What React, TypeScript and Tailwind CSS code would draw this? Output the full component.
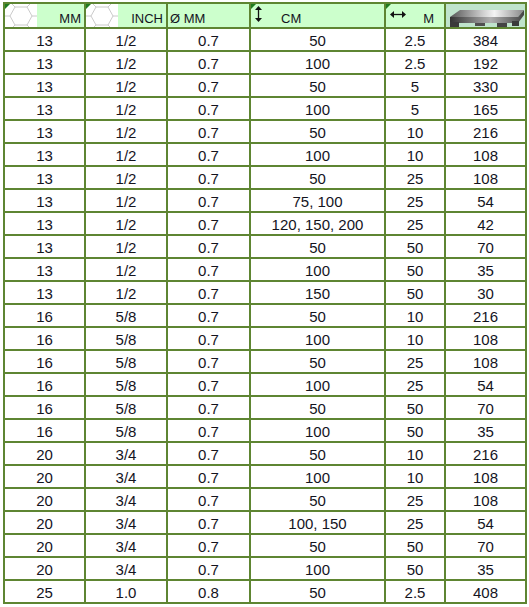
import React from 'react'

const rows: string[][] = [
  ['13', '1/2', '0.7', '50', '2.5', '384'],
  ['13', '1/2', '0.7', '100', '2.5', '192'],
  ['13', '1/2', '0.7', '50', '5', '330'],
  ['13', '1/2', '0.7', '100', '5', '165'],
  ['13', '1/2', '0.7', '50', '10', '216'],
  ['13', '1/2', '0.7', '100', '10', '108'],
  ['13', '1/2', '0.7', '50', '25', '108'],
  ['13', '1/2', '0.7', '75, 100', '25', '54'],
  ['13', '1/2', '0.7', '120, 150, 200', '25', '42'],
  ['13', '1/2', '0.7', '50', '50', '70'],
  ['13', '1/2', '0.7', '100', '50', '35'],
  ['13', '1/2', '0.7', '150', '50', '30'],
  ['16', '5/8', '0.7', '50', '10', '216'],
  ['16', '5/8', '0.7', '100', '10', '108'],
  ['16', '5/8', '0.7', '50', '25', '108'],
  ['16', '5/8', '0.7', '100', '25', '54'],
  ['16', '5/8', '0.7', '50', '50', '70'],
  ['16', '5/8', '0.7', '100', '50', '35'],
  ['20', '3/4', '0.7', '50', '10', '216'],
  ['20', '3/4', '0.7', '100', '10', '108'],
  ['20', '3/4', '0.7', '50', '25', '108'],
  ['20', '3/4', '0.7', '100, 150', '25', '54'],
  ['20', '3/4', '0.7', '50', '50', '70'],
  ['20', '3/4', '0.7', '100', '50', '35'],
  ['25', '1.0', '0.8', '50', '2.5', '408'],
]

function Marker() {
  return (
    <svg className="absolute left-0 top-0" width="5" height="5" viewBox="0 0 5 5">
      <polygon points="0,0 5,0 0,5" fill="#1f7a1f" />
    </svg>
  )
}

function Hex() {
  return (
    <svg className="absolute left-0 top-0 bg-white" width="32" height="23" viewBox="0 0 32 23">
      <g stroke="#c4c4c4" strokeWidth="0.9" fill="none">
        <polygon points="10,3 22,3 27,12 22,21 10,21 5,12" />
        <line x1="10" y1="3" x2="7" y2="0" />
        <line x1="22" y1="3" x2="25" y2="0" />
        <line x1="5" y1="12" x2="0" y2="12" />
        <line x1="27" y1="12" x2="32" y2="12" />
        <line x1="10" y1="21" x2="8" y2="23" />
        <line x1="22" y1="21" x2="24" y2="23" />
      </g>
    </svg>
  )
}

function Pallet() {
  return (
    <svg width="79" height="23" viewBox="0 0 79 23">
      <defs>
        <linearGradient id="top" x1="0" x2="1" y1="0" y2="0">
          <stop offset="0" stopColor="#555" />
          <stop offset="0.45" stopColor="#d0d0d0" />
          <stop offset="0.6" stopColor="#f4f4f4" />
          <stop offset="1" stopColor="#888" />
        </linearGradient>
        <linearGradient id="front" x1="0" x2="1" y1="0" y2="0">
          <stop offset="0" stopColor="#333" />
          <stop offset="0.55" stopColor="#b0b0b0" />
          <stop offset="1" stopColor="#444" />
        </linearGradient>
      </defs>
      <polygon points="14,6 78,6 72,13 4,13" fill="url(#top)" />
      <polygon points="4,13 72,13 78,6 78,11 72,19 4,19" fill="url(#front)" />
      <rect x="4" y="18" width="9" height="7" fill="#3a3a3a" />
      <rect x="29" y="19" width="10" height="3" fill="#505050" />
      <rect x="51" y="19" width="10" height="4" fill="#444" />
      <rect x="66" y="17" width="7" height="5" fill="#3a3a3a" />
    </svg>
  )
}

const cell = 'border-r-2 border-b-2 border-[#5e8532]'

export default function App() {
  return (
    <div className="min-h-screen bg-white pt-[2px] pl-[3px]" style={{ fontFamily: '"Liberation Sans", Arial, sans-serif' }}>
      <div className="grid w-[524px] grid-cols-[81px_82px_83px_135px_60px_81px] border-l-2 border-t-2 border-[#5e8532] text-[#14141e]">
        <div className={`${cell} relative flex h-[25px] items-end justify-end bg-[#ccffcc] pr-[3px] text-[13px] leading-[17px]`}>
          <Hex />
          <Marker />
          MM
        </div>
        <div className={`${cell} relative flex h-[25px] items-end justify-end bg-[#ccffcc] pr-[3px] text-[13px] leading-[17px]`}>
          <Hex />
          <Marker />
          INCH
        </div>
        <div className={`${cell} flex h-[25px] items-end bg-[#ccffcc] pl-[2px] text-[13px] leading-[17px]`}>Ø MM</div>
        <div className={`${cell} relative flex h-[25px] items-end bg-[#ccffcc] pl-[30px] text-[13px] leading-[17px]`}>
          <Marker />
          <svg className="absolute left-[4px] top-[2px]" width="7" height="16" viewBox="0 0 7 16">
            <line x1="3.5" y1="3" x2="3.5" y2="13" stroke="#111" strokeWidth="1.3" />
            <polygon points="3.5,0 7,4 0,4" fill="#111" />
            <polygon points="3.5,16 7,12 0,12" fill="#111" />
          </svg>
          CM
        </div>
        <div className={`${cell} relative flex h-[25px] items-end justify-end bg-[#ccffcc] pr-[10px] text-[13px] leading-[17px]`}>
          <Marker />
          <svg className="absolute left-[4px] top-[7px]" width="16" height="7" viewBox="0 0 16 7">
            <line x1="3" y1="3.5" x2="13" y2="3.5" stroke="#111" strokeWidth="1.3" />
            <polygon points="0,3.5 4,0 4,7" fill="#111" />
            <polygon points="16,3.5 12,0 12,7" fill="#111" />
          </svg>
          M
        </div>
        <div className={`${cell} h-[25px] bg-[#bfe4cc]`}>
          <Pallet />
        </div>
        {rows.map((r, i) =>
          r.map((v, j) => (
            <div key={`${i}-${j}`} className={`${cell} flex h-[23px] items-center justify-center pt-[2px] text-[15px] leading-[21px]`}>
              {v}
            </div>
          ))
        )}
      </div>
    </div>
  )
}
